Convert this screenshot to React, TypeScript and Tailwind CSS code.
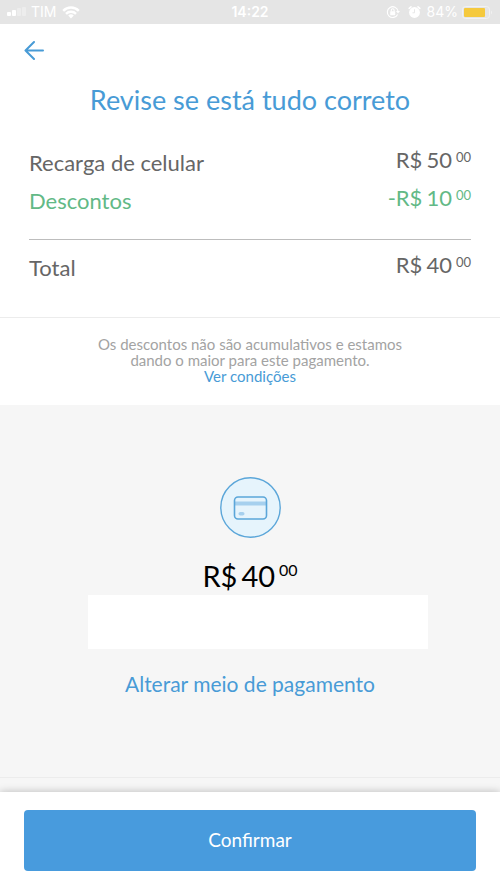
import React from 'react';

const rows = [
  { id: 1, label: 'Recarga de celular', value: '50', sign: '', cents: '00', color: 'text-[#666666]' },
  { id: 2, label: 'Descontos', value: '10', sign: '-', cents: '00', color: 'text-[#62b986]' },
];

type SummaryRowProps = { label: string; sign: string; value: string; cents: string; color: string };

function SummaryRow({ label, sign, value, cents, color }: SummaryRowProps) {
  return (
    <div className={`flex justify-between items-start ${color}`}>
      <span className="text-[22px] leading-[38px]">{label}</span>
      <span className="flex items-start gap-1 text-[22px]">
        <span className="leading-[32px]">{sign}R$</span>
        <span className="leading-[32px]">{value}</span>
        <span className="text-[13px] leading-[26px]">{cents}</span>
      </span>
    </div>
  );
}

function StatusBar() {
  return (
    <div className="grid grid-cols-3 items-center h-6 px-[7px] bg-[#e5e5e5] text-white text-sm font-['Inter',sans-serif]">
      <div className="flex items-center gap-1">
        <svg width="20" height="10" viewBox="0 0 20 10" fill="currentColor">
          <rect x="0" y="5" width="4" height="4" rx="1" />
          <rect x="5" y="3" width="4" height="6" rx="1" />
          <rect x="10" y="1" width="4" height="8" rx="1" opacity="0.3" />
          <rect x="15" y="0" width="4" height="9" rx="1" opacity="0.3" />
        </svg>
        <span>TIM</span>
        <svg className="ml-0.5" width="18" height="13" viewBox="0 0 18 13" fill="none" stroke="currentColor" strokeWidth="2.4">
          <path d="M1.2 4.8a11 11 0 0 1 15.6 0" />
          <path d="M4 7.8a7 7 0 0 1 10 0" />
          <path d="M9 12.4l-2.8-2.8a4 4 0 0 1 5.6 0z" fill="currentColor" stroke="none" />
        </svg>
      </div>
      <span className="text-center font-semibold">14:22</span>
      <div className="flex items-center justify-end gap-1.5">
        <svg className="mr-0.5 shrink-0" width="14" height="14" viewBox="0 0 14 14" fill="none" stroke="currentColor" strokeWidth="1.1">
          <path d="M11.6 9.4a5.4 5.4 0 1 1 .4-3.4" />
          <path d="M10 6h4l-2 2.6z" fill="currentColor" stroke="none" />
          <rect x="4.2" y="6.2" width="5" height="4" rx="0.5" fill="currentColor" stroke="none" />
          <path d="M5.3 6.4V5.2a1.4 1.4 0 0 1 2.8 0v1.2" />
        </svg>
        <svg className="shrink-0" width="13" height="14" viewBox="0 0 13 14" fill="none" stroke="currentColor" strokeWidth="1.6" strokeLinecap="round">
          <circle cx="6.5" cy="7.5" r="5.4" fill="currentColor" stroke="none" />
          <path d="M1.2 3.4l1.8-1.6M11.8 3.4l-1.8-1.6" />
          <path d="M6.5 4.6v3.2H4.8" stroke="#e5e5e5" strokeWidth="0.9" />
        </svg>
        <div className="flex items-center gap-1">
          <span>84%</span>
          <svg className="shrink-0" width="31" height="13" viewBox="0 0 31 13">
            <rect x="0.5" y="0.5" width="27" height="12" rx="3" fill="none" stroke="#f2f2f2" />
            <rect x="2" y="2" width="21" height="9" rx="1" fill="#f5c93d" />
            <path d="M29 4.5q2 2 0 4z" fill="#f2f2f2" />
          </svg>
        </div>
      </div>
    </div>
  );
}

export default function App() {
  return (
    <div className="flex flex-col min-h-screen bg-white font-['Lato',sans-serif]">
      <StatusBar />

      <header className="px-6 pt-4">
        <button type="button" aria-label="Voltar" className="block text-[#489bd6]">
          <svg width="20" height="20" viewBox="0 0 20 20" fill="none" stroke="currentColor" strokeWidth="2" strokeLinecap="round" strokeLinejoin="round">
            <path d="M19 10.5H1.5M10 2L1.5 10.5 10 19" />
          </svg>
        </button>
      </header>

      <main className="flex flex-col grow">
        <section className="px-[29px] pt-6 pb-[30px] border-b border-[#ececec]">
          <h1 className="text-center text-[27px] leading-8 text-[#489bd6]">Revise se está tudo correto</h1>
          <div className="mt-7 pb-[19px] border-b border-[#bdbdbd]">
            {rows.map((row) => (
              <SummaryRow key={row.id} label={row.label} sign={row.sign} value={row.value} cents={row.cents} color={row.color} />
            ))}
          </div>
          <div className="pt-[9px]">
            <SummaryRow label="Total" sign="" value="40" cents="00" color="text-[#666666]" />
          </div>
        </section>

        <section className="px-6 pt-[18px] pb-[21px] text-center text-[15px] leading-4 text-[#a3a3a3]">
          <p>
            Os descontos não são acumulativos e estamos
            <br />
            dando o maior para este pagamento.
          </p>
          <a href="#condicoes" className="text-[#489bd6]">Ver condições</a>
        </section>

        <section className="flex flex-col items-center grow bg-[#f6f6f6] pt-[72px] pb-[78px] border-b border-[#ececec]">
          <svg width="61" height="61" viewBox="0 0 61 61" fill="none">
            <circle cx="30.5" cy="30.5" r="29.7" fill="#e6f4fc" stroke="#5ba6d9" strokeWidth="1.4" />
            <rect x="15" y="24.5" width="31" height="4" fill="#a6d0ee" />
            <rect x="14.5" y="20" width="32" height="22" rx="3.5" stroke="#5ba6d9" strokeWidth="1.6" />
            <rect x="18.5" y="35" width="6" height="3.6" rx="1.8" fill="#a6d0ee" />
          </svg>
          <p className="flex items-start gap-1 mt-5 text-[29px] text-black">
            <span className="leading-9">R$</span>
            <span className="leading-9">40</span>
            <span className="text-base leading-6">00</span>
          </p>
          <div className="w-[68%] h-[54px] mt-px ml-4 bg-white" />
          <a href="#pagamento" className="mt-[21px] text-[21px] leading-7 text-[#489bd6]">Alterar meio de pagamento</a>
        </section>
        <div className="h-[14px] bg-[#f6f6f6]" />
      </main>

      <footer className="relative px-6 pt-[18px] pb-[18px] bg-white shadow-[0_0_8px_rgba(0,0,0,0.25)]">
        <button type="button" className="block w-full h-[61px] rounded-[4px] bg-[#489bdd] text-[19px] text-white">
          Confirmar
        </button>
      </footer>
    </div>
  );
}
